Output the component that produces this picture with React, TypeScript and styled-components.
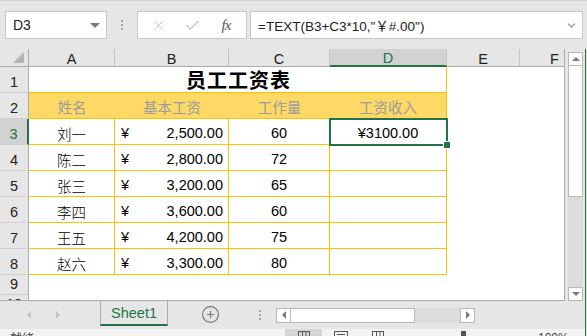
import React from 'react';
import styled, { createGlobalStyle } from 'styled-components';
import { X, Check, ChevronDown, CirclePlus } from 'lucide-react';

const GREEN = '#217346';
const GOLD = '#ffc000';
const FRAME = '#e6e6e6';
const EDGE = '#ababab';
const UI_FONT = '"Liberation Sans", "Noto Sans CJK SC", sans-serif';

const GlobalStyle = createGlobalStyle`
	html, body {
		margin: 0;
		padding: 0;
		background: ${FRAME};
		overflow: hidden;
	}
	body {
		font-family: ${UI_FONT};
	}
`;

const Window = styled.div`
	width: 587px;
	height: 336px;
	display: flex;
	flex-direction: column;
	background: ${FRAME};
	overflow: hidden;
`;

/* formula bar */
const FormulaRow = styled.div`
	height: 49px;
	flex: none;
	box-sizing: border-box;
	display: flex;
	align-items: flex-start;
	padding: 10px 4px 0 5px;
	border-top: 1px solid #d4d4d4;
`;

const NameBox = styled.div`
	width: 102px;
	height: 28px;
	box-sizing: border-box;
	background: #fff;
	border: 1px solid #c6c6c6;
	display: flex;
	align-items: center;
	justify-content: space-between;
	padding: 0 6px 0 7px;
	font-size: 14px;
	color: #222;
`;

const Caret = styled.span`
	width: 0;
	height: 0;
	border-left: 5px solid transparent;
	border-right: 5px solid transparent;
	border-top: 5px solid #7a7a7a;
`;

const Grip = styled.div<{ $width: number }>`
	width: ${(p) => p.$width}px;
	height: 28px;
	display: flex;
	flex-direction: column;
	align-items: center;
	justify-content: center;
	gap: 2px;
	flex: none;
	span {
		width: 2px;
		height: 2px;
		background: #a8a8a8;
	}
`;

const FxBox = styled.div`
	width: 110px;
	height: 28px;
	box-sizing: border-box;
	background: #fff;
	border: 1px solid #c6c6c6;
	display: flex;
	align-items: center;
	padding-left: 3px;
	flex: none;
`;

const FxSlot = styled.div`
	width: 34px;
	display: flex;
	justify-content: center;
	align-items: center;
	color: #bdbdbd;
`;

const FxLabel = styled.span`
	font-family: "Liberation Serif", serif;
	font-style: italic;
	font-size: 15px;
	color: #555;
	letter-spacing: -1px;
`;

const FormulaInput = styled.div`
	flex: 1;
	height: 28px;
	margin-left: 3px;
	box-sizing: border-box;
	background: #fff;
	border: 1px solid #c6c6c6;
	display: flex;
	align-items: center;
	justify-content: space-between;
	padding: 0 4px 0 7px;
	font-size: 13.5px;
	color: #222;
	white-space: nowrap;
`;

/* lower part, green window edge on the right */
const LowerPane = styled.div`
	width: 586px;
	flex: 1;
	display: flex;
	flex-direction: column;
	box-sizing: border-box;
	border-right: 1px solid ${GREEN};
`;

const SheetRow = styled.div`
	height: 252px;
	display: flex;
	flex: none;
`;

const Sheet = styled.div`
	width: 565px;
	height: 252px;
	box-sizing: border-box;
	border-right: 1px solid ${EDGE};
	border-bottom: 1px solid ${EDGE};
	overflow: hidden;
	display: grid;
	grid-template-columns: 29px 86px 114px 101px 117px 73px 70px;
	grid-template-rows: 18px repeat(8, 26px) 20px 20px;
	background: #fff;
	font-family: ${UI_FONT};
	font-size: 14.5px;
	color: #000;
`;

const Corner = styled.div`
	background: ${FRAME};
	box-sizing: border-box;
	border-right: 1px solid ${EDGE};
	border-bottom: 1px solid ${EDGE};
	display: flex;
	align-items: flex-end;
	justify-content: flex-end;
	padding: 0 4px 3px 0;
`;

const ColHead = styled.div<{ $active?: boolean }>`
	background: ${(p) => (p.$active ? '#d2d2d2' : FRAME)};
	color: ${(p) => (p.$active ? GREEN : '#222')};
	box-sizing: border-box;
	border-right: 1px solid #c4c4c4;
	border-bottom: ${(p) => (p.$active ? `2px solid ${GREEN}` : `1px solid ${EDGE}`)};
	display: flex;
	align-items: center;
	justify-content: center;
	padding-top: 2px;
	font-size: 14.5px;
`;

const RowHead = styled.div<{ $active?: boolean }>`
	background: ${(p) => (p.$active ? '#d2d2d2' : FRAME)};
	color: ${(p) => (p.$active ? GREEN : '#222')};
	box-sizing: border-box;
	border-right: ${(p) => (p.$active ? `2px solid ${GREEN}` : `1px solid ${EDGE}`)};
	border-bottom: 1px solid #cfcfcf;
	display: flex;
	align-items: flex-end;
	justify-content: center;
	padding-bottom: 2px;
	font-size: 14.5px;
`;

const Cell = styled.div<{ $right?: boolean; $bottom?: boolean; $justify?: string }>`
	position: relative;
	box-sizing: border-box;
	border-right: ${(p) => (p.$right ? `1px solid ${GOLD}` : 'none')};
	border-bottom: ${(p) => (p.$bottom ? `1px solid ${GOLD}` : 'none')};
	display: flex;
	align-items: center;
	justify-content: ${(p) => p.$justify || 'flex-start'};
	padding-top: 3px;
	white-space: nowrap;
`;

const MoneyCell = styled(Cell)`
	justify-content: space-between;
	padding: 3px 5px 0 6px;
`;

const TitleCell = styled.div`
	grid-column: span 4;
	box-sizing: border-box;
	border-right: 1px solid ${GOLD};
	border-bottom: 1px solid ${GOLD};
	display: flex;
	align-items: center;
	justify-content: center;
	font-family: "Noto Sans CJK SC", sans-serif;
	font-weight: 700;
	font-size: 20px;
	letter-spacing: 1px;
	padding-left: 2px;
`;

const HeadCell = styled.div<{ $right?: boolean }>`
	box-sizing: border-box;
	background: #ffd966;
	border-right: ${(p) => (p.$right ? `1px solid ${GOLD}` : 'none')};
	border-bottom: 1px solid ${GOLD};
	display: flex;
	align-items: center;
	justify-content: center;
	padding-top: 2px;
	color: #9c9c9c;
	font-family: "Noto Sans CJK SC", sans-serif;
	font-size: 14.5px;
`;

const CnText = styled.span`
	font-family: "Noto Sans CJK SC", sans-serif;
	font-weight: 300;
`;

const Selection = styled.div`
	position: absolute;
	top: -1px;
	left: -1px;
	right: -2px;
	bottom: -2px;
	border: 2px solid ${GREEN};
	pointer-events: none;
	z-index: 2;
`;

const FillHandle = styled.div`
	position: absolute;
	right: -4px;
	bottom: -4px;
	width: 6px;
	height: 6px;
	background: ${GREEN};
	box-shadow: 0 0 0 1px #fff;
`;

/* vertical scroll bar */
const VScroll = styled.div`
	width: 20px;
	display: flex;
	flex-direction: column;
	padding: 3px 2px 0 3px;
	box-sizing: border-box;
`;

const ScrollBtn = styled.div<{ $h?: number }>`
	flex: none;
	width: 15px;
	height: ${(p) => p.$h || 14}px;
	box-sizing: border-box;
	background: #fff;
	border: 1px solid #b8b8b8;
	display: flex;
	align-items: center;
	justify-content: center;
`;

const Thumb = styled.div<{ $size: number; $vertical?: boolean }>`
	flex: none;
	box-sizing: border-box;
	background: #fff;
	border: 1px solid #b8b8b8;
	${(p) => (p.$vertical ? `height: ${p.$size}px; width: 15px; border-top: none;` : `width: ${p.$size}px; height: 15px; border-left: none;`)}
`;

const Track = styled.div<{ $vertical?: boolean }>`
	flex: 1;
	background: #dcdcdc;
	${(p) => (p.$vertical ? 'width: 15px;' : 'height: 15px;')}
`;

const Tri = styled.span<{ $dir: 'up' | 'down' | 'left' | 'right'; $color?: string; $size?: number }>`
	width: 0;
	height: 0;
	${({ $dir, $color = '#7a7a7a', $size = 4 }) => {
		const side = `${$size}px solid transparent`;
		const solid = `${$size}px solid ${$color}`;
		if ($dir === 'up') return `border-left: ${side}; border-right: ${side}; border-bottom: ${solid};`;
		if ($dir === 'down') return `border-left: ${side}; border-right: ${side}; border-top: ${solid};`;
		if ($dir === 'left') return `border-top: ${side}; border-bottom: ${side}; border-right: ${solid};`;
		return `border-top: ${side}; border-bottom: ${side}; border-left: ${solid};`;
	}}
`;

/* sheet tabs */
const TabBar = styled.div`
	height: 28px;
	flex: none;
	display: flex;
	align-items: center;
`;

const NavArea = styled.div`
	width: 100px;
	display: flex;
	align-items: center;
	gap: 25px;
	padding-left: 27px;
	box-sizing: border-box;
	align-self: stretch;
`;

const Tab = styled.div`
	width: 68px;
	align-self: stretch;
	height: 25px;
	box-sizing: border-box;
	border-left: 1px solid ${EDGE};
	border-right: 1px solid ${EDGE};
	border-bottom: 2px solid ${GREEN};
	display: flex;
	align-items: center;
	justify-content: center;
	color: ${GREEN};
	font-size: 14.5px;
`;

const PlusSlot = styled.div`
	width: 84px;
	display: flex;
	justify-content: center;
	align-items: center;
	color: #7a7a7a;
	padding-bottom: 2px;
`;

const HScroll = styled.div`
	width: 199px;
	display: flex;
	align-items: center;
	margin-left: 8px;
`;

const HButton = styled.div`
	flex: none;
	width: 15px;
	height: 15px;
	box-sizing: border-box;
	background: #fff;
	border: 1px solid #b8b8b8;
	display: flex;
	align-items: center;
	justify-content: center;
`;

/* status bar */
const StatusBar = styled.div`
	height: 7px;
	flex: none;
	background: #f3f3f3;
	overflow: hidden;
	display: flex;
	font-size: 12px;
	color: #444;
`;

const Ready = styled.div`
	width: 285px;
	padding: 2px 0 0 10px;
	box-sizing: border-box;
	font-family: "Noto Sans CJK SC", sans-serif;
	line-height: 14px;
`;

const ViewBtn = styled.div<{ $active?: boolean }>`
	width: 37px;
	background: ${(p) => (p.$active ? '#d4d4d4' : 'transparent')};
	display: flex;
	justify-content: center;
	padding-top: 2px;
	box-sizing: border-box;
`;

const ZoomArea = styled.div`
	flex: 1;
	display: flex;
	padding-top: 2px;
	box-sizing: border-box;
	span {
		display: block;
	}
`;

const SliderKnob = styled.span`
	width: 5px;
	height: 10px;
	background: #555;
	margin-left: 65px;
`;

const Percent = styled.span`
	margin-left: 72px;
	line-height: 14px;
`;

const cols = ['A', 'B', 'C', 'D', 'E', 'F'];

const people = [
	{ name: '刘一', pay: '2,500.00', qty: '60' },
	{ name: '陈二', pay: '2,800.00', qty: '72' },
	{ name: '张三', pay: '3,200.00', qty: '65' },
	{ name: '李四', pay: '3,600.00', qty: '60' },
	{ name: '王五', pay: '4,200.00', qty: '75' },
	{ name: '赵六', pay: '3,300.00', qty: '80' }
];

const GridIcon = () => (
	<svg width='12' height='10' viewBox='0 0 12 10'>
		<rect x='0.5' y='0.5' width='11' height='9' fill='none' stroke='#555' />
		<line x1='4.5' y1='0' x2='4.5' y2='10' stroke='#555' />
		<line x1='8' y1='0' x2='8' y2='10' stroke='#555' />
	</svg>
);

const PageIcon = () => (
	<svg width='14' height='10' viewBox='0 0 14 10'>
		<rect x='0.5' y='0.5' width='13' height='9' fill='none' stroke='#555' />
		<line x1='3' y1='3.5' x2='11' y2='3.5' stroke='#555' />
	</svg>
);

const App: React.FC = () => {
	return (
		<>
			<GlobalStyle />
			<Window>
				<FormulaRow>
					<NameBox>
						D3
						<Caret />
					</NameBox>
					<Grip $width={30}>
						<span />
						<span />
						<span />
					</Grip>
					<FxBox>
						<FxSlot>
							<X size={15} strokeWidth={1.5} />
						</FxSlot>
						<FxSlot>
							<Check size={17} strokeWidth={1.5} />
						</FxSlot>
						<FxSlot>
							<FxLabel>fx</FxLabel>
						</FxSlot>
					</FxBox>
					<FormulaInput>
						<span>=TEXT(B3+C3*10,&quot;￥#.00&quot;)</span>
						<ChevronDown size={13} color='#8a8a8a' strokeWidth={2} />
					</FormulaInput>
				</FormulaRow>

				<LowerPane>
					<SheetRow>
						<Sheet>
							<Corner>
								<svg width='11' height='11' viewBox='0 0 11 11'>
									<polygon points='11,0 11,11 0,11' fill='#b4b4b4' />
								</svg>
							</Corner>
							{cols.map((c) => (
								<ColHead key={c} $active={c === 'D'}>
									{c}
								</ColHead>
							))}

							<RowHead>1</RowHead>
							<TitleCell>员工工资表</TitleCell>
							<Cell />
							<Cell />

							<RowHead>2</RowHead>
							<HeadCell>姓名</HeadCell>
							<HeadCell>基本工资</HeadCell>
							<HeadCell>工作量</HeadCell>
							<HeadCell $right>工资收入</HeadCell>
							<Cell />
							<Cell />

							{people.map((p, i) => (
								<React.Fragment key={p.name}>
									<RowHead $active={i === 0}>{i + 3}</RowHead>
									<Cell $right $bottom $justify='center'>
										<CnText>{p.name}</CnText>
									</Cell>
									<MoneyCell $right $bottom>
										<span>¥</span>
										<span>{p.pay}</span>
									</MoneyCell>
									<Cell $right $bottom $justify='center'>
										{p.qty}
									</Cell>
									<Cell $right $bottom $justify='center'>
										{i === 0 && (
											<>
												¥3100.00
												<Selection>
													<FillHandle />
												</Selection>
											</>
										)}
									</Cell>
									<Cell />
									<Cell />
								</React.Fragment>
							))}

							{[9, 10].map((n) => (
								<React.Fragment key={n}>
									<RowHead>{n}</RowHead>
									<Cell />
									<Cell />
									<Cell />
									<Cell />
									<Cell />
									<Cell />
								</React.Fragment>
							))}
						</Sheet>

						<VScroll>
							<ScrollBtn>
								<Tri $dir='up' />
							</ScrollBtn>
							<Thumb $vertical $size={131} />
							<Track $vertical />
							<ScrollBtn>
								<Tri $dir='down' />
							</ScrollBtn>
						</VScroll>
					</SheetRow>

					<TabBar>
						<NavArea>
							<Tri $dir='left' $color='#c4c4c4' />
							<Tri $dir='right' $color='#c4c4c4' />
						</NavArea>
						<Tab>Sheet1</Tab>
						<PlusSlot>
							<CirclePlus size={19} strokeWidth={1.5} />
						</PlusSlot>
						<Grip $width={16}>
							<span />
							<span />
							<span />
						</Grip>
						<HScroll>
							<HButton>
								<Tri $dir='left' />
							</HButton>
							<Thumb $size={124} />
							<Track />
							<HButton>
								<Tri $dir='right' />
							</HButton>
						</HScroll>
					</TabBar>

					<StatusBar>
						<Ready>就绪</Ready>
						<ViewBtn $active>
							<GridIcon />
						</ViewBtn>
						<ViewBtn>
							<PageIcon />
						</ViewBtn>
						<ViewBtn>
							<GridIcon />
						</ViewBtn>
						<ZoomArea>
							<SliderKnob />
							<Percent>100%</Percent>
						</ZoomArea>
					</StatusBar>
				</LowerPane>
			</Window>
		</>
	);
};

export default App;
